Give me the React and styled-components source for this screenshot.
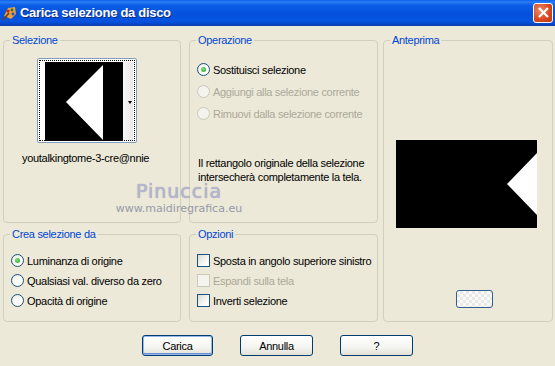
import React from 'react';
import styled, { createGlobalStyle } from 'styled-components';

const GlobalStyle = createGlobalStyle`
  html, body { margin: 0; padding: 0; background: #ece9d8; }
  body {
    font-family: Tahoma, "Liberation Sans", Arial, sans-serif;
    font-size: 11px;
    letter-spacing: -0.3px;
    color: #000;
  }
`;

export default function App() {
  return (
    <>
      <GlobalStyle />
      <Window>
        <TitleBar>
          <AppIcon viewBox="0 0 16 16">
            <path d="M2 11 L6 3 L13 2 L14 9 L9 14 Z" fill="#e8a040" />
            <circle cx="6" cy="6" r="1.6" fill="#d02020" />
            <circle cx="10" cy="5" r="1.4" fill="#2a7a2a" />
            <circle cx="11" cy="9" r="1.4" fill="#2050c0" />
            <path d="M1 15 L7 8" stroke="#704010" strokeWidth="1.6" />
          </AppIcon>
          <Title>Carica selezione da disco</Title>
          <CloseButton>
            <svg width="13" height="13" viewBox="0 0 13 13">
              <path d="M2 2 L11 11 M11 2 L2 11" stroke="#fff" strokeWidth="2.2" />
            </svg>
          </CloseButton>
        </TitleBar>

        <Body>
          <Group $area="sel">
            <Legend>Selezione</Legend>
            <Thumb>
              <ThumbImage>
                <svg width="78" height="79" viewBox="0 0 78 79">
                  <rect width="78" height="79" fill="#000" />
                  <polygon points="21,40 58,3 58,78" fill="#fff" />
                </svg>
              </ThumbImage>
              <ThumbStrip>
                <DropArrow />
              </ThumbStrip>
            </Thumb>
            <FileName>youtalkingtome-3-cre@nnie</FileName>
          </Group>

          <Group $area="op">
            <Legend>Operazione</Legend>
            <OptionList $top={22} $gap={9}>
              <Option>
                <Radio $checked />
                <span>Sostituisci selezione</span>
              </Option>
              <Option $disabled>
                <Radio $disabled />
                <span>Aggiungi alla selezione corrente</span>
              </Option>
              <Option $disabled>
                <Radio $disabled />
                <span>Rimuovi dalla selezione corrente</span>
              </Option>
            </OptionList>
            <Note>
              Il rettangolo originale della selezione<br />
              intersecherà completamente la tela.
            </Note>
          </Group>

          <Group $area="prev">
            <Legend>Anteprima</Legend>
            <PreviewBox>
              <svg width="141" height="88" viewBox="0 0 141 88">
                <rect width="141" height="88" fill="#000" />
                <polygon points="111,44 141,13 141,75" fill="#fff" />
              </svg>
            </PreviewBox>
            <SmallButton />
          </Group>

          <Group $area="crea">
            <Legend>Crea selezione da</Legend>
            <OptionList $top={19} $gap={7}>
              <Option>
                <Radio $checked />
                <span>Luminanza di origine</span>
              </Option>
              <Option>
                <Radio />
                <span>Qualsiasi val. diverso da zero</span>
              </Option>
              <Option>
                <Radio />
                <span>Opacità di origine</span>
              </Option>
            </OptionList>
          </Group>

          <Group $area="opz">
            <Legend>Opzioni</Legend>
            <OptionList $top={19} $gap={7}>
              <Option>
                <Check />
                <span>Sposta in angolo superiore sinistro</span>
              </Option>
              <Option $disabled>
                <Check $disabled />
                <span>Espandi sulla tela</span>
              </Option>
              <Option>
                <Check />
                <span>Inverti selezione</span>
              </Option>
            </OptionList>
          </Group>

          <Watermark>
            <WmName>Pinuccia</WmName>
            <WmSite>www.maidiregrafica.eu</WmSite>
          </Watermark>
        </Body>

        <ButtonRow>
          <Button $default>Carica</Button>
          <Button>Annulla</Button>
          <Button>?</Button>
        </ButtonRow>
      </Window>
    </>
  );
}

const Window = styled.div`
  width: 555px;
  height: 366px;
  background: #ece9d8;
  overflow: hidden;
`;

const TitleBar = styled.div`
  height: 26px;
  display: flex;
  align-items: center;
  padding: 0 2px 0 2px;
  box-sizing: border-box;
  background: linear-gradient(to bottom, #0a5fe8 0%, #2b7df5 8%, #0c5ee6 20%, #0350dd 55%, #0654e0 85%, #0840c0 100%);
  border-bottom: 1px solid #1340a8;
`;

const AppIcon = styled.svg`
  width: 16px;
  height: 16px;
  margin-right: 2px;
`;

const Title = styled.div`
  flex: 1;
  color: #fff;
  font-family: "Liberation Sans", Arial, sans-serif;
  font-weight: bold;
  font-size: 13px;
  text-shadow: 1px 1px 0 #0a2a80;
`;

const CloseButton = styled.div`
  width: 20px;
  height: 20px;
  border: 1px solid #fff;
  border-radius: 3px;
  box-sizing: border-box;
  background: radial-gradient(circle at 35% 35%, #f08a6a, #d6451e 60%, #c0391a);
  display: flex;
  align-items: center;
  justify-content: center;
`;

const Body = styled.div`
  position: relative;
  display: grid;
  grid-template-columns: 178px 191px 169px;
  grid-template-rows: 183px 88px;
  grid-template-areas:
    "sel op prev"
    "crea opz prev";
  column-gap: 5px;
  row-gap: 11px;
  padding: 14px 0 0 3px;
`;

const Group = styled.div`
  grid-area: ${p => p.$area};
  position: relative;
  border: 1px solid #d0d0bf;
  border-radius: 4px;
  display: flex;
  flex-direction: column;
  margin-left: ${p => (p.$area === 'op' || p.$area === 'opz' ? '3px' : p.$area === 'prev' ? '1px' : '0')};
  margin-right: ${p => (p.$area === 'op' || p.$area === 'opz' ? '-1px' : p.$area === 'prev' ? '-2px' : '0')};
`;

const Legend = styled.span`
  position: absolute;
  top: -8px;
  left: 6px;
  padding: 0 2px;
  background: #ece9d8;
  color: #0046d5;
  line-height: 14px;
`;

const Thumb = styled.div`
  margin: 17px 0 0 33px;
  width: 100px;
  height: 85px;
  box-sizing: border-box;
  border: 1px solid #7f9db9;
  border-radius: 2px;
  background: #fff;
  padding: 2px;
  display: flex;
  outline: 1px dotted #000;
  outline-offset: -3px;
`;

const ThumbImage = styled.div`
  margin: 1px 0 0 5px;
  width: 78px;
  height: 79px;
  line-height: 0;
`;

const ThumbStrip = styled.div`
  flex: 1;
  margin: 1px 1px 0 0;
  background: linear-gradient(to right, #f7f7f7, #e8e8e8);
  display: flex;
  align-items: center;
  justify-content: flex-end;
  padding-right: 1px;
`;

const DropArrow = styled.span`
  width: 0;
  height: 0;
  border-left: 2.5px solid transparent;
  border-right: 2.5px solid transparent;
  border-top: 3px solid #000;
  margin-top: 3px;
`;

const FileName = styled.div`
  margin: 9px 0 0 18px;
  white-space: nowrap;
`;

const OptionList = styled.div`
  display: flex;
  flex-direction: column;
  gap: ${p => p.$gap}px;
  margin: ${p => p.$top}px 0 0 7px;
`;

const Option = styled.label`
  display: flex;
  align-items: center;
  gap: 3px;
  height: 13px;
  white-space: nowrap;
  color: ${p => (p.$disabled ? '#aca899' : '#000')};
`;

const Radio = styled.span`
  width: 13px;
  height: 13px;
  box-sizing: border-box;
  border-radius: 50%;
  border: 1px solid ${p => (p.$disabled ? '#cac8bb' : '#1c5180')};
  background: ${p =>
    p.$disabled
      ? '#f4f3ee'
      : 'radial-gradient(circle at 65% 65%, #fff 30%, #e2e2da 100%)'};
  display: flex;
  align-items: center;
  justify-content: center;
  flex-shrink: 0;
  &::after {
    content: '';
    display: ${p => (p.$checked ? 'block' : 'none')};
    width: 5px;
    height: 5px;
    border-radius: 50%;
    background: radial-gradient(circle at 40% 40%, #7de27d, #21a121);
  }
`;

const Check = styled.span`
  width: 13px;
  height: 13px;
  box-sizing: border-box;
  border: 1px solid ${p => (p.$disabled ? '#cac8bb' : '#1c5180')};
  background: ${p =>
    p.$disabled ? '#f4f3ee' : 'linear-gradient(135deg, #dcdcd4, #fff 80%)'};
  flex-shrink: 0;
`;

const Note = styled.div`
  margin: 36px 0 0 8px;
  line-height: 14px;
  white-space: nowrap;
`;

const PreviewBox = styled.div`
  margin: 99px 0 0 12px;
  width: 141px;
  height: 88px;
  line-height: 0;
`;

const SmallButton = styled.div`
  margin: 62px 0 0 72px;
  width: 37px;
  height: 18px;
  box-sizing: border-box;
  border: 1px solid #335e90;
  border-radius: 3px;
  background:
    linear-gradient(45deg, #e8e8e8 25%, transparent 25%, transparent 75%, #e8e8e8 75%) 0 0 / 6px 6px,
    linear-gradient(45deg, #e8e8e8 25%, transparent 25%, transparent 75%, #e8e8e8 75%) 3px 3px / 6px 6px,
    #fafaf7;
`;

const Watermark = styled.div`
  position: absolute;
  left: 117px;
  top: 155px;
  width: 124px;
  display: flex;
  flex-direction: column;
  align-items: center;
  pointer-events: none;
  font-family: "DejaVu Sans", "Liberation Sans", sans-serif;
  letter-spacing: 0;
`;

const WmName = styled.div`
  font-size: 19px;
  letter-spacing: 1px;
  color: #b7b7d0;
  text-shadow: 0 0 1px #8b8bab;
  line-height: 21px;
`;

const WmSite = styled.div`
  font-size: 11px;
  color: #9898aa;
  line-height: 14px;
`;

const ButtonRow = styled.div`
  display: flex;
  gap: 27px;
  padding: 13px 0 0 142px;
`;

const Button = styled.button`
  width: ${p => (p.$default ? '71px' : '73px')};
  height: 21px;
  box-sizing: border-box;
  border: 1px solid #003c74;
  border-radius: 3px;
  background: linear-gradient(to bottom, #fff 0%, #f4f4f0 60%, #e3e1d6 100%);
  font-family: Tahoma, "Liberation Sans", Arial, sans-serif;
  font-size: 11px;
  letter-spacing: -0.3px;
  color: #000;
  padding: 0;
  box-shadow: ${p => (p.$default ? 'inset 0 0 0 1px #98b8ea, inset 0 -1px 0 1px #6a8fd8' : 'none')};
`;
